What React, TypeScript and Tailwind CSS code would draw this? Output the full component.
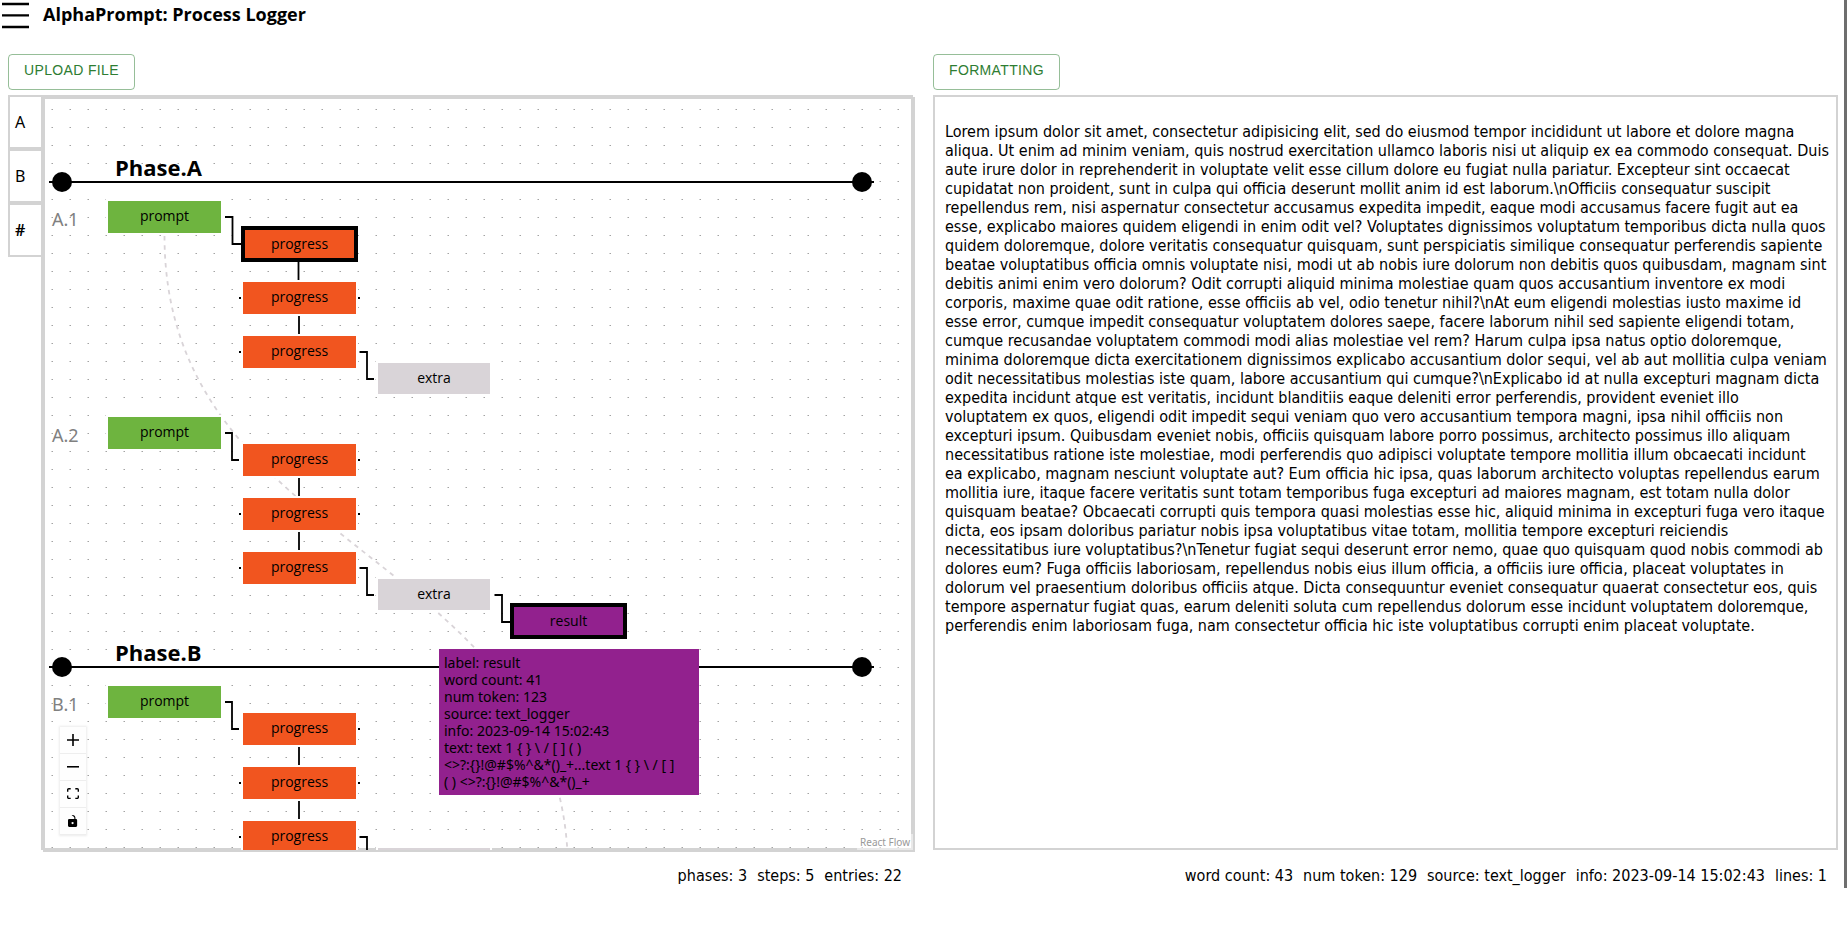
import React from "react";

type Kind = "prompt" | "progress" | "extra" | "result";
type FlowNode = { kind: Kind; x: number; y: number; selected?: boolean; collapsed?: boolean };

const FILL: Record<Kind, string> = {
  prompt: "bg-[#6eb43f] h-9 w-[117px]",
  progress: "bg-[#f1551f] h-9 w-[117px]",
  extra: "bg-[#d9d4d8] h-[35px] w-[116px]",
  result: "bg-[#92218e] h-9 w-[117px]",
};

// Coordinates are in canvas space: the origin is the top-left corner of the pane.
const nodes: FlowNode[] = [
  { kind: "prompt", x: 61, y: 100 },
  { kind: "progress", x: 196, y: 127, selected: true },
  { kind: "progress", x: 196, y: 181 },
  { kind: "progress", x: 196, y: 235 },
  { kind: "extra", x: 331, y: 262 },
  { kind: "prompt", x: 61, y: 316 },
  { kind: "progress", x: 196, y: 343 },
  { kind: "progress", x: 196, y: 397 },
  { kind: "progress", x: 196, y: 451 },
  { kind: "extra", x: 331, y: 478 },
  { kind: "result", x: 465, y: 504, selected: true },
  { kind: "prompt", x: 61, y: 585 },
  { kind: "progress", x: 196, y: 612 },
  { kind: "progress", x: 196, y: 666 },
  { kind: "progress", x: 196, y: 720 },
  { kind: "extra", x: 331, y: 747, collapsed: true },
];

const edges = [
  "M180 118H187.5V145H197",
  "M180 334H187V361H194",
  "M180 603H187V630H194",
  "M314.5 253H322V280H329",
  "M314.5 469H322V496H329",
  "M314.5 738H322V765H329",
  "M449.5 496H457V523H466",
  "M253.5 163V181",
  "M254 217V235",
  "M254 379V397",
  "M254 433V451",
  "M254 648V666",
  "M254 702V720",
];

const handles: [number, number][] = [
  [195, 199], [314, 199], [195, 253], [314, 361], [195, 415], [314, 415],
  [195, 469], [314, 630], [195, 684], [314, 684], [195, 738],
];

const phases = [
  { name: "Phase.A", y: 83, top: "top-[54px]" },
  { name: "Phase.B", y: 568, top: "top-[539px]" },
];

const steps = [
  { name: "A.1", top: "top-[108px]" },
  { name: "A.2", top: "top-[324px]" },
  { name: "B.1", top: "top-[593px]" },
];

const tabs = [
  { label: "A", weight: "font-normal" },
  { label: "B", weight: "font-normal" },
  { label: "#", weight: "font-semibold" },
];

const paragraph = [
  "Lorem ipsum dolor sit amet, consectetur adipisicing elit, sed do eiusmod tempor incididunt ut labore et dolore magna",
  "aliqua. Ut enim ad minim veniam, quis nostrud exercitation ullamco laboris nisi ut aliquip ex ea commodo consequat. Duis",
  "aute irure dolor in reprehenderit in voluptate velit esse cillum dolore eu fugiat nulla pariatur. Excepteur sint occaecat",
  "cupidatat non proident, sunt in culpa qui officia deserunt mollit anim id est laborum.\\nOfficiis consequatur suscipit",
  "repellendus rem, nisi aspernatur consectetur accusamus expedita impedit, eaque modi accusamus facere fugit aut ea",
  "esse, explicabo maiores quidem eligendi in enim odit vel? Voluptates dignissimos voluptatum temporibus dicta nulla quos",
  "quidem doloremque, dolore veritatis consequatur quisquam, sunt perspiciatis similique consequatur perferendis sapiente",
  "beatae voluptatibus officia omnis voluptate nisi, modi ut ab nobis iure dolorum non debitis quos quibusdam, magnam sint",
  "debitis animi enim vero dolorum? Odit corrupti aliquid minima molestiae quam quos accusantium inventore ex modi",
  "corporis, maxime quae odit ratione, esse officiis ab vel, odio tenetur nihil?\\nAt eum eligendi molestias iusto maxime id",
  "esse error, cumque impedit consequatur voluptatem dolores saepe, facere laborum nihil sed sapiente eligendi totam,",
  "cumque recusandae voluptatem commodi modi alias molestiae vel rem? Harum culpa ipsa natus optio doloremque,",
  "minima doloremque dicta exercitationem dignissimos explicabo accusantium dolor sequi, vel ab aut mollitia culpa veniam",
  "odit necessitatibus molestias iste quam, labore accusantium qui cumque?\\nExplicabo id at nulla excepturi magnam dicta",
  "expedita incidunt atque est veritatis, incidunt blanditiis eaque deleniti error perferendis, provident eveniet illo",
  "voluptatem ex quos, eligendi odit impedit sequi veniam quo vero accusantium tempora magni, ipsa nihil officiis non",
  "excepturi ipsum. Quibusdam eveniet nobis, officiis quisquam labore porro possimus, architecto possimus illo aliquam",
  "necessitatibus ratione iste molestiae, modi perferendis quo adipisci voluptate tempore mollitia illum obcaecati incidunt",
  "ea explicabo, magnam nesciunt voluptate aut? Eum officia hic ipsa, quas laborum architecto voluptas repellendus earum",
  "mollitia iure, itaque facere veritatis sunt totam temporibus fuga excepturi ad maiores magnam, est totam nulla dolor",
  "quisquam beatae? Obcaecati corrupti quis tempora quasi molestias esse hic, aliquid minima in excepturi fuga vero itaque",
  "dicta, eos ipsam doloribus pariatur nobis ipsa voluptatibus vitae totam, mollitia tempore excepturi reiciendis",
  "necessitatibus iure voluptatibus?\\nTenetur fugiat sequi deserunt error nemo, quae quo quisquam quod nobis commodi ab",
  "dolores eum? Fuga officiis laboriosam, repellendus nobis eius illum officia, a officiis iure officia, placeat voluptates in",
  "dolorum vel praesentium doloribus officiis atque. Dicta consequuntur eveniet consequatur quaerat consectetur eos, quis",
  "tempore aspernatur fugiat quas, earum deleniti soluta cum repellendus dolorum esse incidunt voluptatem doloremque,",
  "perferendis enim laboriosam fuga, nam consectetur officia hic iste voluptatibus corrupti enim placeat voluptate.",
].join("\n");

function OutlinedButton({ children }: { children: React.ReactNode }) {
  return (
    <button
      type="button"
      className="h-9 rounded border border-[#2e7d32]/50 px-[15px] pb-1 font-['Liberation_Sans',sans-serif] text-sm tracking-wide text-[#2e7d32] uppercase"
    >
      {children}
    </button>
  );
}

function NodeBox({ node }: { node: FlowNode }) {
  const base =
    "absolute flex items-center justify-center font-['Open_Sans','Noto_Sans',sans-serif] text-sm text-black";
  const frame = node.selected ? "border-4 border-black" : "border-2 border-white pb-[2px]";
  return (
    <button
      type="button"
      className={`${base} ${frame} ${FILL[node.kind]}`}
      style={{ left: node.x, top: node.y }}
    >
      {node.collapsed ? null : node.kind}
    </button>
  );
}

function Controls() {
  const item =
    "flex h-[27px] w-[26px] items-center justify-center border-b border-[#eee] bg-[#fefefe]";
  return (
    <div className="absolute bottom-[15px] left-[15px] flex flex-col shadow-[0_0_2px_1px_rgba(0,0,0,0.08)]">
      <button type="button" aria-label="Zoom in" className={item}>
        <svg viewBox="0 0 32 32" className="w-3">
          <path d="M32 18.133H18.133V32h-4.266V18.133H0v-4.266h13.867V0h4.266v13.867H32z" />
        </svg>
      </button>
      <button type="button" aria-label="Zoom out" className={item}>
        <svg viewBox="0 0 32 5" className="w-3">
          <path d="M0 0h32v4.2H0z" />
        </svg>
      </button>
      <button type="button" aria-label="Fit view" className={item}>
        <svg viewBox="0 0 32 30" className="w-3">
          <path d="M3.692 4.63c0-.53.4-.938.939-.938h5.215V0H4.708C2.13 0 0 2.054 0 4.63v5.216h3.692V4.631zM27.354 0h-5.2v3.692h5.17c.53 0 .984.4.984.939v5.215H32V4.631A4.624 4.624 0 0027.354 0zm.954 24.83c0 .532-.4.94-.939.94h-5.215v3.768h5.215c2.577 0 4.631-2.13 4.631-4.707v-5.139h-3.692v5.139zm-23.677.94c-.531 0-.939-.4-.939-.94v-5.138H0v5.139c0 2.577 2.13 4.707 4.708 4.707h5.138V25.77H4.631z" />
        </svg>
      </button>
      <button type="button" aria-label="Toggle interactivity" className={item}>
        <svg viewBox="0 0 25 32" className="h-3">
          <path d="M21.333 10.667H19.81V7.619C19.81 3.429 16.38 0 12.19 0c-4.114 1.828-1.37 2.133.305 2.438 1.676.305 4.42 2.59 4.42 5.181v3.048H3.047A3.056 3.056 0 000 13.714v15.238A3.056 3.056 0 003.048 32h18.285a3.056 3.056 0 003.048-3.048V13.714a3.056 3.056 0 00-3.048-3.047zM12.19 24.533a3.056 3.056 0 01-3.047-3.047 3.056 3.056 0 013.047-3.048 3.056 3.056 0 013.048 3.048 3.056 3.056 0 01-3.048 3.047z" />
        </svg>
      </button>
    </div>
  );
}

function FlowCanvas() {
  return (
    <div className="relative h-full w-full overflow-hidden">
      <svg className="absolute inset-0 h-full w-full" aria-hidden="true">
        <defs>
          <pattern id="dots" x="6" y="10" width="18" height="18" patternUnits="userSpaceOnUse">
            <rect width="1" height="1" fill="#d0d0d0" />
            <rect x="1" width="1" height="1" fill="#a4a4a4" />
          </pattern>
        </defs>
        <rect width="100%" height="100%" fill="url(#dots)" />
        <path
          d="M119.5 137C119.5 455 523 455 523 773"
          fill="none"
          stroke="#d9d4d8"
          strokeWidth="1.8"
          strokeDasharray="4.5 4.5"
        />
        {phases.map((p) => (
          <g key={p.name}>
            <path d={`M4 ${p.y}H829`} stroke="#000" strokeWidth="1.8" />
            <circle cx="17" cy={p.y} r="10" />
            <circle cx="817" cy={p.y} r="10" />
          </g>
        ))}
      </svg>
      {nodes.map((n) => (
        <NodeBox key={`${n.x}-${n.y}`} node={n} />
      ))}
      <svg className="pointer-events-none absolute inset-0 h-full w-full" aria-hidden="true">
        {edges.map((d) => (
          <path key={d} d={d} fill="none" stroke="#000" strokeWidth="1.8" />
        ))}
        {handles.map(([x, y]) => (
          <rect key={`${x}-${y}`} x={x - 1} y={y - 1} width="2" height="2" />
        ))}
      </svg>
      {phases.map((p) => (
        <h2
          key={p.name}
          className={`absolute left-[70px] font-['Open_Sans','Noto_Sans',sans-serif] text-[22px] leading-7 font-bold ${p.top}`}
        >
          {p.name}
        </h2>
      ))}
      {steps.map((s) => (
        <span
          key={s.name}
          className={`absolute left-[7px] font-['Noto_Sans',sans-serif] text-lg leading-6 text-[#808080] ${s.top}`}
        >
          {s.name}
        </span>
      ))}
      <div className="absolute top-[550px] left-[394px] w-[260px] bg-[#92218e] p-[5px] font-['Noto_Sans',sans-serif] text-sm leading-[17px]">
        <p>label: result</p>
        <p>word count: 41</p>
        <p>num token: 123</p>
        <p>source: text_logger</p>
        <p>info: 2023-09-14 15:02:43</p>
        <p className="whitespace-pre-line">
          {"text: text 1 { } \\ / [ ] ( )\n<>?:{}!@#$%^&*()_+...text 1 { } \\ / [ ]\n( ) <>?:{}!@#$%^&*()_+"}
        </p>
      </div>
      <Controls />
      <a
        href="#react-flow"
        className="absolute right-0 bottom-0 bg-white/50 px-[3px] py-[2px] font-['Noto_Sans',sans-serif] text-[10px] leading-3 text-[#999]"
      >
        React Flow
      </a>
    </div>
  );
}

export default function App() {
  return (
    <div className="flex items-start bg-white font-['DejaVu_Sans_Condensed','Noto_Sans',sans-serif] text-base leading-[19px] text-black">
      <main className="min-w-0 flex-1">
        <header className="flex h-[30px] items-start gap-[14px]">
          <button type="button" aria-label="Menu" className="mt-[2px] ml-[2px] h-[27px] w-[27px]">
            <svg viewBox="0 0 27 27" className="h-full w-full" stroke="#000" strokeWidth="2.4">
              <path d="M0 2H27M0 13.4H27M0 25H27" />
            </svg>
          </button>
          <h1 className="font-['Open_Sans','Noto_Sans',sans-serif] text-[18px] leading-[29px] font-bold">
            AlphaPrompt: Process Logger
          </h1>
        </header>
        <div className="grid grid-cols-2 gap-5 pt-6 pr-[6px] pl-2">
          <section className="min-w-0">
            <OutlinedButton>Upload file</OutlinedButton>
            <div className="mt-[5px] flex items-start">
              <nav className="w-[33px] shrink-0 font-['Noto_Sans',sans-serif]">
                {tabs.map((t) => (
                  <button
                    key={t.label}
                    type="button"
                    className={`flex h-[54px] w-full items-center border-2 border-r-0 border-[#d3d3d3] pl-[5px] text-base ${t.weight}`}
                  >
                    {t.label}
                  </button>
                ))}
              </nav>
              <div className="h-[755px] min-w-0 flex-1 border-2 border-[#d3d3d3]">
                <div className="box-content h-full w-full border-2 border-[#d3d3d3]">
                  <FlowCanvas />
                </div>
              </div>
            </div>
            <footer className="flex justify-end gap-[10px] pt-4 pr-[11px]">
              <span>phases: 3</span>
              <span>steps: 5</span>
              <span>entries: 22</span>
            </footer>
          </section>
          <section className="min-w-0">
            <OutlinedButton>Formatting</OutlinedButton>
            <div className="mt-[5px] h-[755px] border-2 border-[#d3d3d3] pt-[25px] pl-[10px]">
              <p className="whitespace-pre-line">{paragraph}</p>
            </div>
            <footer className="flex justify-end gap-[10px] pt-4 pr-[11px]">
              <span>word count: 43</span>
              <span>num token: 129</span>
              <span>source: text_logger</span>
              <span>info: 2023-09-14 15:02:43</span>
              <span>lines: 1</span>
            </footer>
          </section>
        </div>
      </main>
      <div className="h-[888px] w-[3px] shrink-0 bg-[#6e6e6e]" />
    </div>
  );
}
